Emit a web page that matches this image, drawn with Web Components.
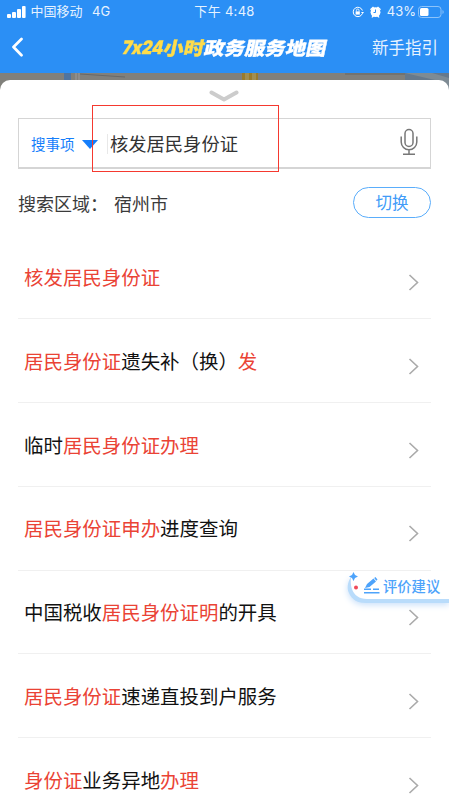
<!DOCTYPE html>
<html lang="zh-CN">
<head>
<meta charset="utf-8">
<title>7x24小时政务服务地图</title>
<style>
html,body{margin:0;height:798px;overflow:hidden;background:#fff}
body{font-family:"Liberation Sans","Noto Sans CJK SC",sans-serif}
</style>
</head>
<body>
<service-app></service-app>
<script>
const define = (name, html) => customElements.define(name, class extends HTMLElement {
  constructor(){ super(); this.attachShadow({mode:'open'}).innerHTML = html; }
});

define('status-bar', `<style>
:host{display:grid;grid-template-columns:1fr auto 1fr;align-items:center;height:23px;color:#e6f2ff;font:13px/23px Inter,"Noto Sans CJK SC",sans-serif;white-space:pre}
.l,.r{display:flex;align-items:center}
.l{padding-left:7px}.l svg{margin-right:4.500px}.g{margin-left:9.500px}
.r{justify-content:flex-end;padding-right:5px}
.t{letter-spacing:.3px}
svg{display:block;flex:none}
</style>
<div class="l"><svg width="19" height="12" fill="#fff"><rect x="0" y="8" width="4" height="4" rx="1"/><rect x="5" y="6" width="4" height="6" rx="1"/><rect x="10" y="3" width="4" height="9" rx="1"/><rect x="15" y="0" width="3.600" height="12" rx="1"/></svg><span>中国移动</span><span class="g">4G</span></div>
<div class="t">下午 4:48</div>
<div class="r">
<svg width="12" height="12" viewBox="0 0 12 12" fill="none" stroke="#fff" stroke-width="1"><path d="M10.300 7.700A4.700 4.700 0 1 1 10.400 4.500"/><path d="M9 6h3l-1.400 2z" fill="#fff" stroke="none"/><rect x="3.600" y="5.400" width="4.200" height="3.200" fill="#fff" stroke="none"/><path d="M4.400 5.500V4.300a1.300 1.300 0 0 1 2.600 0v1.200" stroke-width=".8"/></svg>
<svg style="margin:0 6px 0 6px" width="11" height="12" viewBox="0 0 11 12"><g fill="#fff"><circle cx="5.500" cy="6.200" r="4.900"/><path d="M0 3.200 3 .5l1.200 1L1 4.300zM11 3.200 8 .5 6.800 1.500 10 4.300zM1.500 11.500l1-2.500 1.500 1.300-1.200 1.200zM9.500 11.500l-1-2.500-1.500 1.300 1.200 1.200z"/></g><path d="M5.500 3.500v3h-2" fill="none" stroke="#2b8ff5"/></svg>
<span>43%</span>
<svg style="margin-left:2px" width="26" height="12"><rect x=".5" y=".5" width="22.500" height="11" rx="3" fill="none" stroke="#8dc3fa"/><rect x="2" y="2" width="8.500" height="8" rx="1.500" fill="#fff"/><path d="M24.500 4a2.300 2.300 0 0 1 0 4z" fill="#8dc3fa"/></svg>
</div>`);

define('nav-bar', `<style>
:host{display:grid;grid-template-columns:1fr 204px 1fr;align-items:center;height:50px;box-sizing:border-box;padding:0 11px 2px 11px;color:#fff}
svg{display:block}
.title{height:30px;font:900 18.500px/30px "Noto Sans CJK SC",sans-serif;white-space:nowrap;display:flex;transform:skewX(-12deg)}
.title span{display:block;flex:none;transform:scaleX(1.100);transform-origin:0 50%;-webkit-text-stroke:.35px currentColor}
.n{width:41px;font-family:Inter,sans-serif;font-feature-settings:"calt" 0;transform:scaleX(.87)!important}
.h{width:40.700px}
.y{color:#ffdc4a}
.help{justify-self:end;font:16.500px/24px "Noto Sans CJK SC",sans-serif;color:#e6f2ff}
</style>
<svg width="13" height="20" fill="none" stroke="#fff" stroke-width="2.700" stroke-linecap="round" stroke-linejoin="round"><path d="M10.500 2 2.500 10l8 8.300"/></svg>
<div class="title"><span class="y n">7x24</span><span class="y h">小时</span><span>政务服务地图</span></div>
<div class="help">新手指引</div>`);

define('map-strip', `<style>
:host{display:block;height:40px;background:#81807b}
svg{display:block}
</style><svg width="449" height="40"><path d="M64 0h7v12h-7z" fill="#50749f"/><path d="M76 0v12M79 0v12" stroke="#9b9a9c"/><path d="M80 1l45 3" stroke="#686867"/><path d="M242 0h16v12h-16z" fill="#9a7b2c"/><path d="M245 0h4v12h-4zM252 0h4v12h-4z" fill="#a28e51"/><path d="M345 0h60v2h-60z" fill="#73736f"/><path d="M405 0h44v20h-44z" fill="#7e8b94"/><path d="M405 0l30 7h-30zM432 0h17v5z" fill="#67798b"/></svg>`);

define('search-box', `<style>
:host{display:flex;align-items:center;height:51px;box-sizing:border-box;border:1px solid #d5d5d5;border-bottom-width:2px;margin:0 18px;padding:0 12px;color:#333;font-family:"Noto Sans CJK SC",sans-serif}
.kind{font-size:14.500px;color:#157efb}
.tri{width:0;border:8px solid transparent;border-top:9px solid #157efb;border-bottom:0;margin-left:7.500px}
.q{border-left:1px solid #e8e8e8;height:20px;line-height:18px;font-size:18.300px;margin:2px 0 0 9px;padding-left:2px;flex:1}
.tri{margin-top:3px}.kind{margin-top:1px}
svg{display:block;margin-bottom:3px}
</style><span class="kind">搜事项</span><i class="tri"></i><span class="q"><slot></slot></span>
<svg width="18" height="28" viewBox="0 0 18 28" fill="none" stroke="#777" stroke-width="1.500"><rect x="5" y="1.500" width="8" height="17" rx="4"/><path d="M1.200 8.500v5.500a7.800 7.800 0 0 0 15.600 0V8.500M9 22v4M3 26.200h12"/></svg>`);

define('area-row', `<style>
:host{display:flex;align-items:center;margin:18px 18px 0;height:31px;font:18px/30px "Noto Sans CJK SC",sans-serif;color:#3b3b3b}
.v{margin-left:6px;flex:1}
button{all:unset;box-sizing:border-box;width:78px;height:31px;border:1px solid #5aadfb;border-radius:16px;text-align:center;color:#409bf8;font:16.500px/29px "Noto Sans CJK SC",sans-serif}
</style><span>搜索区域：</span><span class="v"><slot></slot></span><button>切换</button>`);

define('result-row', `<style>
:host{display:flex;align-items:center;justify-content:space-between;height:83.750px;box-sizing:border-box;border-bottom:1px solid #f0f0f0;margin:0 18px;padding:0 11px 0 6px;font:19.450px/30px "Noto Sans CJK SC",sans-serif;color:#111;white-space:nowrap}
::slotted(em){font-style:normal;color:#ea4335}
svg{display:block;margin-top:10px}
</style><span><slot></slot></span><svg width="12" height="18" fill="none" stroke="#aaa" stroke-width="1.600"><path d="m1.500 2 8 7.500-8 7.500"/></svg>`);

define('feedback-tab', `<style>
:host{position:absolute;left:347px;top:571px;width:102px;height:36px;display:flex;align-items:center;box-sizing:border-box;padding:0 0 7px 16px;color:#4da3fb;font:500 14.300px/28px "Noto Sans CJK SC",sans-serif;white-space:nowrap}
.bg,.deco{position:absolute;left:0;top:0;overflow:visible}
.pen{position:relative;display:block;margin-right:3px}
span{position:relative}
</style>
<svg class="bg" width="102" height="36"><path d="M4 6C0 12 0 18 2 22 5 29 11 32 19 32H102V4z" fill="#b9dcfb" style="filter:drop-shadow(0 2px 3px #c9e0fa)"/><path d="M6 0C1 12 4 28 20 28H102V0z" fill="#fff"/></svg>
<svg class="deco" width="14" height="24"><path d="M6.500 1 8 4 11 5.500 8 7 6.500 10 5 7 2 5.500 5 4z" fill="#4da3fb"/><circle cx="9" cy="16.500" r="2" fill="#f04a5a"/></svg>
<svg class="pen" width="17" height="17" viewBox="0 0 17 17"><path d="M2 11 4 7 10.500 1.500 13 4.500 6.500 10zM11.200 1l1.200-1L14.500 2.500l-1.200 1.200z" fill="#4da3fb"/><path d="M1 12.200h7M10 12.200h6M1 15.700h15.500" stroke="#4da3fb" stroke-width="1.500"/></svg><span>评价建议</span>`);

define('focus-frame', `<style>:host{position:absolute;left:92px;top:105px;width:187px;height:67px;box-sizing:border-box;border:1px solid #f5392f}</style>`);

define('service-app', `<style>
:host{display:block;position:relative;width:449px;height:798px;overflow:hidden}
header{background:#2b8ff5}
main{background:#fff;border-radius:10px 10px 0 0;margin-top:-33px;height:718px;position:relative;overflow:hidden}
.grip{display:block;margin:0 auto;padding-top:10px;position:relative;left:-.5px}
search-box{margin-top:15px}
.list{padding-top:17.700px}
</style>
<header><status-bar></status-bar><nav-bar></nav-bar></header>
<map-strip></map-strip>
<main>
<svg class="grip" width="30" height="13" fill="none" stroke="#ccc" stroke-width="4" stroke-linecap="round" stroke-linejoin="round"><path d="M2.500 2.500 15 9.500 27.500 2.500"/></svg>
<search-box>核发居民身份证</search-box>
<area-row>宿州市</area-row>
<div class="list">
<result-row><em>核发居民身份证</em></result-row>
<result-row><em>居民身份证</em>遗失补（换）<em>发</em></result-row>
<result-row>临时<em>居民身份证办理</em></result-row>
<result-row><em>居民身份证申办</em>进度查询</result-row>
<result-row>中国税收<em>居民身份证明</em>的开具</result-row>
<result-row><em>居民身份证</em>速递直投到户服务</result-row>
<result-row><em>身份证</em>业务异地<em>办理</em></result-row>
</div>
</main>
<focus-frame></focus-frame>
<feedback-tab></feedback-tab>`);
</script>
</body>
</html>
